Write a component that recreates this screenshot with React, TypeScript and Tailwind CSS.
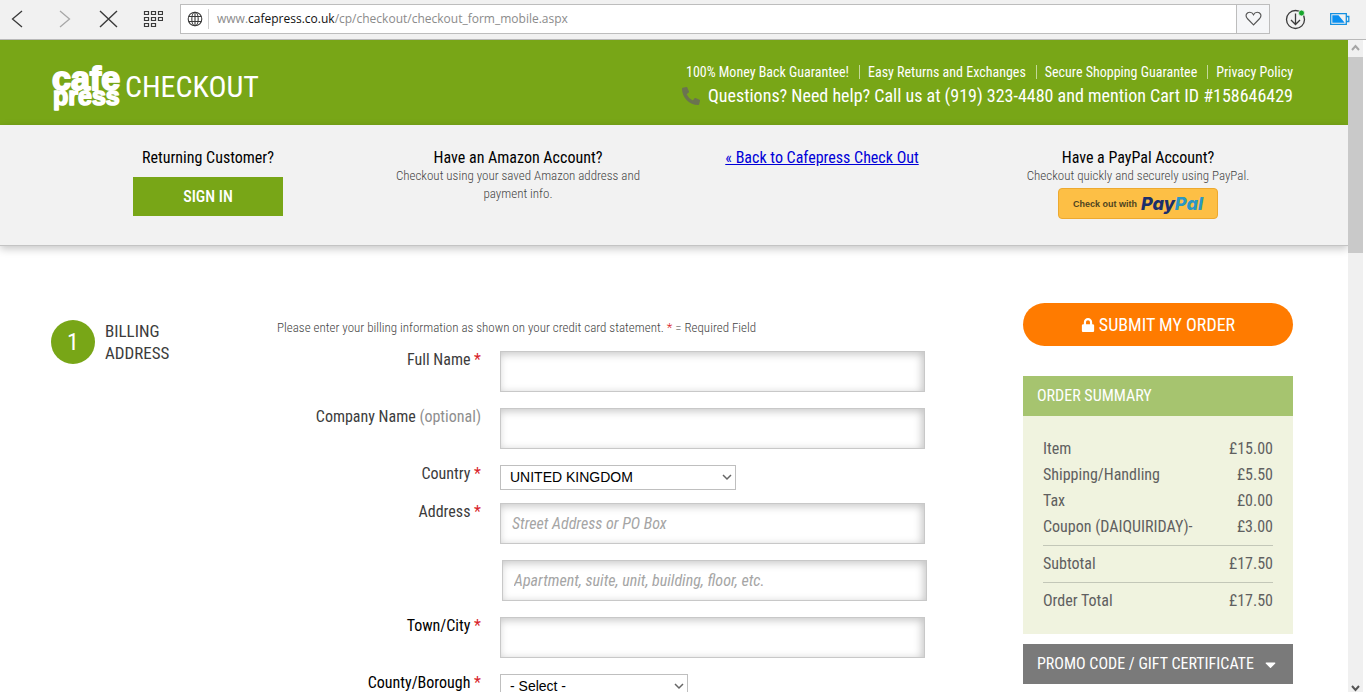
import { useState } from "react";
import { FaCaretDown, FaLock, FaPhoneAlt } from "react-icons/fa";

interface FormRowProps {
  id: string;
  label: string;
  required?: boolean;
  optional?: boolean;
  dark?: boolean;
  children: React.ReactNode;
}

interface SummaryLine {
  name: string;
  price: string;
}

const condensed =
  "font-['Roboto_Condensed','Liberation_Sans_Narrow',Roboto,sans-serif]";

const inputStyle =
  "block w-full max-w-[425px] h-[41px] border border-[#c8c8c8] bg-white px-[11px] text-[16px] text-[#333] shadow-[inset_-2px_2px_8px_rgba(0,0,0,0.24)] placeholder:italic placeholder:text-[#a5a5a5] outline-none";

const headerLinks = [
  "100% Money Back Guarantee!",
  "Easy Returns and Exchanges",
  "Secure Shopping Guarantee",
  "Privacy Policy",
];

const charges: SummaryLine[] = [
  { name: "Item", price: "£15.00" },
  { name: "Shipping/Handling", price: "£5.50" },
  { name: "Tax", price: "£0.00" },
  { name: "Coupon (DAIQUIRIDAY)-", price: "£3.00" },
];

const totals: SummaryLine[] = [
  { name: "Subtotal", price: "£17.50" },
  { name: "Order Total", price: "£17.50" },
];

const BrowserBar = () => {
  return (
    <div className="h-10 shrink-0 flex items-center bg-[#f1f1f1] border-b border-[#b9b9b9] pb-[2px] pl-[10px] pr-4 text-[#3a3a3a]">
      <button aria-label="Back">
        <svg width="14" height="20" viewBox="0 0 14 20" fill="none" stroke="currentColor" strokeWidth="1.3">
          <path d="M12 2 2.500 10 12 18" />
        </svg>
      </button>
      <button aria-label="Forward" className="ml-[35px] text-[#a8a8a8]">
        <svg width="14" height="20" viewBox="0 0 14 20" fill="none" stroke="currentColor" strokeWidth="1.3">
          <path d="M1 2 10.500 10 1 18" />
        </svg>
      </button>
      <button aria-label="Stop" className="ml-[26px]">
        <svg width="19" height="20" viewBox="0 0 19 20" fill="none" stroke="currentColor" strokeWidth="1.4">
          <path d="M1 2 18 18M18 2 1 18" />
        </svg>
      </button>
      <button aria-label="Speed dial" className="ml-[25px]">
        <svg width="20" height="18" viewBox="0 0 20 18" fill="none" stroke="currentColor" strokeWidth="1.2">
          <path d="M1.500 1.500h4v3h-4zM8.500 1.500h4v3h-4zM15.500 1.500h4v3h-4zM1.500 7.500h4v3h-4zM8.500 7.500h4v3h-4zM15.500 7.500h4v3h-4zM1.500 13.500h4v3h-4zM8.500 13.500h4v3h-4z" />
        </svg>
      </button>
      <div className="ml-[17px] flex-1 h-[30px] flex items-center bg-white border border-[#bdbdbd]">
        <svg className="ml-[6px]" width="16" height="16" viewBox="0 0 16 16" fill="none" stroke="currentColor" strokeWidth="1.1">
          <circle cx="8" cy="8" r="6.800" />
          <ellipse cx="8" cy="8" rx="3.200" ry="6.800" />
          <path d="M8 1v14M1.800 5.500h12.400M1.800 10.500h12.400" />
        </svg>
        <div className="ml-[5px] h-[20px] border-l border-[#cfcfcf]" />
        <div
          role="textbox"
          aria-label="Address"
          className="ml-2 flex-1 font-['Open_Sans',sans-serif] text-[12px] text-[#8b8b8b]"
        >
          www.<span className="text-[#111]">cafepress.co.uk</span>
          /cp/checkout/checkout_form_mobile.aspx
        </div>
        <button
          aria-label="Add to favourites"
          className="h-full w-[33px] flex items-center justify-center border-l border-[#bdbdbd] bg-[#f5f6f8]"
        >
          <svg width="17" height="15" viewBox="0 0 18 16" fill="none" stroke="#555" strokeWidth="1.2">
            <path d="M9 14.800 2.400 8C-.5 4.500 2 1.300 5 1.300c2 0 3.300 1.200 4 2.700.7-1.500 2-2.700 4-2.700 3 0 5.500 3.200 2.600 6.700z" />
          </svg>
        </button>
      </div>
      <button aria-label="Downloads" className="ml-[15px]">
        <svg width="22" height="22" viewBox="0 0 22 22" fill="none" stroke="currentColor" strokeWidth="1.3">
          <circle cx="10.500" cy="11.500" r="9" />
          <path d="M10.500 5.500v11M6 12l4.500 4.500L15 12" />
          <circle cx="16.500" cy="5" r="3" fill="#17a62c" stroke="#f1f1f1" strokeWidth="0.800" />
        </svg>
      </button>
      <svg className="ml-[23px]" width="20" height="12" viewBox="0 0 20 12">
        <path d="M.7.700h15.600v10.600H.7zM16.500 3.500h2.300v5h-2.300" fill="none" stroke="#1490e0" strokeWidth="1.300" />
        <path d="M2.300 2.300h6.200l6.200 7.400H2.300z" fill="#0a8ff0" />
      </svg>
    </div>
  );
};

const Logo = () => {
  return (
    <svg width="72" height="56" viewBox="0 0 72 56" role="img" aria-label="cafe press">
      <g
        fill="#fff"
        stroke="#fff"
        strokeLinejoin="round"
        className="font-['Liberation_Sans',Arial,sans-serif] font-bold"
      >
        <text x="1" y="31" fontSize="34" strokeWidth="2">
          cafe
        </text>
        <text x="2" y="46" fontSize="25" strokeWidth="1.600">
          press
        </text>
      </g>
    </svg>
  );
};

const Header = () => {
  return (
    <header className="h-[85px] flex items-center justify-between bg-[#78a617] pl-[51px] pr-[55px] pt-2 text-white">
      <div className="flex items-center gap-[2px]">
        <Logo />
        <h1 className="text-[30px] leading-[40px]">CHECKOUT</h1>
      </div>
      <div className="flex flex-col items-end pt-[1px]">
        <nav className="flex items-center">
          {headerLinks.map((link, i) => (
            <a
              key={link}
              href="#"
              className={
                i > 0
                  ? "ml-[10px] border-l border-[#c3d89a] pl-2 text-[14px] leading-[14px]"
                  : "text-[14px] leading-[14px]"
              }
            >
              {link}
            </a>
          ))}
        </nav>
        <p className="mt-1 flex items-center gap-2 text-[18px] leading-[26px]">
          <FaPhoneAlt className="text-[#6b7350]" />
          Questions? Need help? Call us at (919) 323-4480 and mention Cart ID
          #158646429
        </p>
      </div>
    </header>
  );
};

const AccountBar = () => {
  return (
    <section className="h-[121px] grid grid-cols-4 bg-[#f2f2f2] border-b border-[#c4c4c4] pl-[53px] pr-[55px] pt-6 text-center text-[16px] leading-[18px] text-black shadow-[0_3px_8px_rgba(0,0,0,0.22)]">
      <div>
        <h2>Returning Customer?</h2>
        <button className="mt-[10px] h-[39px] w-[150px] bg-[#78a617] font-medium text-white">
          SIGN IN
        </button>
      </div>
      <div>
        <h2>Have an Amazon Account?</h2>
        <p className="mx-auto w-[260px] text-[13px] font-light text-[#444]">
          Checkout using your saved Amazon address and payment info.
        </p>
      </div>
      <div className="pr-3">
        <a href="#" className="text-[#0000d8] underline">
          « Back to Cafepress Check Out
        </a>
      </div>
      <div>
        <h2>Have a PayPal Account?</h2>
        <p className="text-[13px] font-light text-[#444]">
          Checkout quickly and securely using PayPal.
        </p>
        <button className="mx-auto mt-[3px] flex h-[31px] w-[160px] items-center justify-center gap-1 rounded-[4px] border border-[#eda92f] bg-[#fdbf45]">
          <span className="font-['Liberation_Sans',Arial,sans-serif] text-[9px] font-bold text-[#4f4420]">
            Check out with
          </span>
          <span className="font-['Inter',sans-serif] text-[18px] leading-[20px] font-extrabold italic text-[#1c2f6b]">
            Pay<span className="text-[#2a97c4]">Pal</span>
          </span>
        </button>
      </div>
    </section>
  );
};

const FormRow: React.FC<FormRowProps> = ({
  id,
  label,
  required,
  optional,
  dark,
  children,
}) => {
  return (
    <div className="flex">
      <label
        htmlFor={id}
        className={
          dark
            ? "w-[204px] shrink-0 mr-[19px] text-right text-[16px] leading-[18px] text-black"
            : "w-[204px] shrink-0 mr-[19px] text-right text-[16px] leading-[18px] text-[#3c3c3c]"
        }
      >
        {label} {required && <span className="text-[#d8232a]">*</span>}
        {optional && <span className="text-[#8f8f8f]">(optional)</span>}
      </label>
      <div className="flex-1">{children}</div>
    </div>
  );
};

const SelectArrow = () => {
  return (
    <svg
      className="pointer-events-none absolute top-[9px] right-1"
      width="10"
      height="7"
      viewBox="0 0 10 7"
      fill="none"
      stroke="#666"
      strokeWidth="1.500"
    >
      <path d="M1 1l4 4 4-4" />
    </svg>
  );
};

const selectStyle =
  "block h-[25px] w-full appearance-none border border-[#bfbfbf] bg-white pl-[9px] font-['Liberation_Sans',Arial,sans-serif] text-[14px] text-black outline-none";

const BillingForm = () => {
  const [country, setCountry] = useState("UNITED KINGDOM");
  const [county, setCounty] = useState("");

  return (
    <form className="flex-1 pt-[72px]">
      <p className="mb-[14px] text-[13px] leading-[19px] font-light text-[#444]">
        Please enter your billing information as shown on your credit card
        statement. <span className="text-[#d8232a]">*</span> = Required Field
      </p>
      <div className="flex flex-col gap-4">
        <FormRow id="fullName" label="Full Name" required>
          <input id="fullName" type="text" className={inputStyle} />
        </FormRow>
        <FormRow id="company" label="Company Name" optional>
          <input id="company" type="text" className={inputStyle} />
        </FormRow>
        <FormRow id="country" label="Country" required>
          <div className="relative w-[236px] -mb-[3px]">
            <select
              id="country"
              value={country}
              onChange={(e) => setCountry(e.target.value)}
              className={selectStyle}
            >
              <option>UNITED KINGDOM</option>
            </select>
            <SelectArrow />
          </div>
        </FormRow>
        <FormRow id="address" label="Address" required>
          <input
            id="address"
            type="text"
            placeholder="Street Address or PO Box"
            className={inputStyle}
          />
          <div className="mt-4 pl-[2px] -mr-[2px]">
            <input
              type="text"
              aria-label="Address line 2"
              placeholder="Apartment, suite, unit, building, floor, etc."
              className={inputStyle}
            />
          </div>
        </FormRow>
        <FormRow id="city" label="Town/City" required dark>
          <input id="city" type="text" className={inputStyle} />
        </FormRow>
        <FormRow id="county" label="County/Borough" required dark>
          <div className="relative w-[188px]">
            <select
              id="county"
              value={county}
              onChange={(e) => setCounty(e.target.value)}
              className={selectStyle}
            >
              <option value="">- Select -</option>
            </select>
            <SelectArrow />
          </div>
        </FormRow>
      </div>
    </form>
  );
};

const OrderSummary = () => {
  return (
    <aside className="w-[270px] shrink-0 pt-[57px]">
      <button className="flex h-[43px] w-full items-center justify-center gap-1 rounded-full bg-[#ff7b00] text-[18px] text-white">
        <FaLock className="text-[14px]" />
        SUBMIT MY ORDER
      </button>
      <h2 className="mt-[30px] bg-[#a6c46f] px-[14px] text-[16px] leading-[40px] text-white">
        ORDER SUMMARY
      </h2>
      <div className="bg-[#f0f3df] px-5 pt-5 pb-[15px]">
        <table className="w-full border-collapse text-[16px] leading-[26px] text-[#606060]">
          <tbody>
            {charges.map((line) => (
              <tr key={line.name}>
                <td className="p-0">{line.name}</td>
                <td className="p-0 text-right">{line.price}</td>
              </tr>
            ))}
          </tbody>
          <tbody className="before:block before:h-[5px]">
            {totals.map((line) => (
              <tr key={line.name} className="border-t border-[#c3c7b8]">
                <td className="pt-[5px] pb-[5px]">{line.name}</td>
                <td className="pt-[5px] pb-[5px] text-right">{line.price}</td>
              </tr>
            ))}
          </tbody>
        </table>
      </div>
      <button className="mt-[10px] flex h-10 w-full items-center justify-between bg-[#7a7a7a] px-[14px] text-[16px] whitespace-nowrap text-white">
        PROMO CODE / GIFT CERTIFICATE
        <FaCaretDown className="text-[17px]" />
      </button>
    </aside>
  );
};

const Scrollbar = () => {
  return (
    <div className="mr-[3px] flex w-[15px] shrink-0 flex-col items-center bg-[#f0f0f0]">
      <svg className="mt-1 shrink-0" width="9" height="8" viewBox="0 0 9 8" fill="none" stroke="#a5a5a5" strokeWidth="2">
        <path d="M1 6l3.500-4L8 6" />
      </svg>
      <div className="mt-[5px] h-[30%] w-full bg-[#c9c9c9]" />
      <svg className="mt-auto shrink-0" width="9" height="8" viewBox="0 0 9 8" fill="none" stroke="#555" strokeWidth="2">
        <path d="M1 2l3.500 4L8 2" />
      </svg>
    </div>
  );
};

const App = () => {
  return (
    <div className={`flex h-screen flex-col bg-white ${condensed}`}>
      <BrowserBar />
      <div className="flex min-h-0 flex-1">
        <div className="flex-1 overflow-hidden">
          <Header />
          <AccountBar />
          <main className="flex pl-[51px] pr-[55px]">
            <div className="flex w-[226px] shrink-0 gap-[10px] pt-[74px]">
              <div className="flex size-11 items-center justify-center rounded-full bg-[#78a617] text-[24px] text-white">
                1
              </div>
              <h2 className="text-[17px] leading-[22px] text-[#3c3c3c]">
                BILLING
                <br />
                ADDRESS
              </h2>
            </div>
            <BillingForm />
            <OrderSummary />
          </main>
        </div>
        <Scrollbar />
      </div>
    </div>
  );
};

export default App;
